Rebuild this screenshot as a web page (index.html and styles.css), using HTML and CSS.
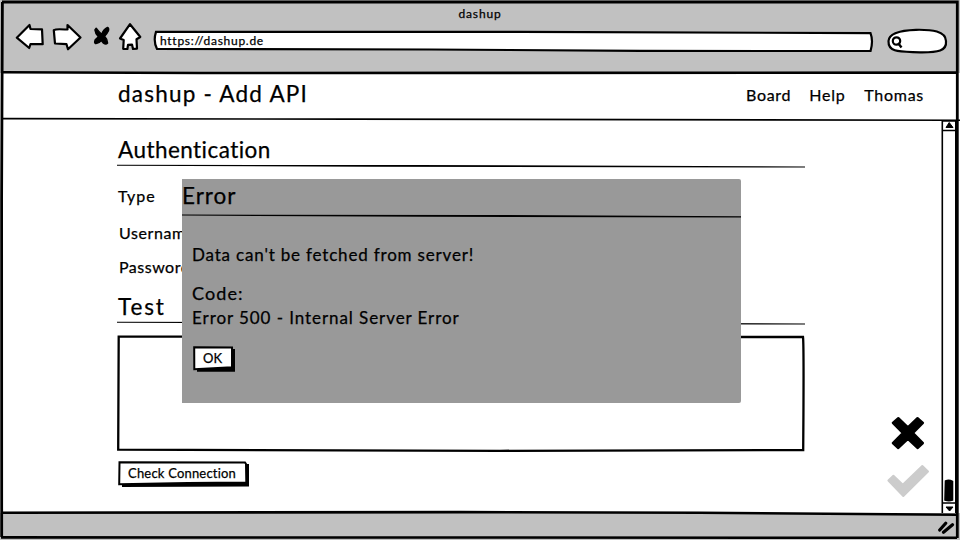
FILE: index.html
```html
<!DOCTYPE html>
<html lang="en">
<head>
<meta charset="utf-8">
<title>dashup</title>
<link rel="stylesheet" href="styles.css">
</head>
<body>
<div class="window">
  <header class="chrome">
    <div class="chrome-title"><span>dashup</span></div>
    <div class="toolbar">
      <svg class="nav-icons" width="130" height="32" viewBox="14 21 130 32" fill="#fff" stroke="#000" stroke-width="2.2" stroke-linejoin="round">
        <path d="M16.8 37.7 29.5 25 30.5 29 42 29.3 42.7 44.2 30.5 44 29.2 48Z"/>
        <path d="M53.8 30.2Q56 28.7 65 29.5L67.5 29.5 67.5 25 80.5 37.5 68 49.3 66.5 44.2 55 43.5Z"/>
        <path d="M96.2 28.2Q99 32 101.7 34.3 103.5 29.5 107.5 27.5 109.2 28 108.5 30.8 107 34 104.6 36.3 107.3 39 107.6 43 106 45 103.5 43.2L101.3 40.5Q98.5 44 95.3 43.5 94 42.5 95.2 39.8L98.4 36.7Q95.3 34 94.9 30Z" fill="#000" stroke-width="1.4"/>
        <path d="M130 24.2 140.3 37 136.5 39.3 137 48.6 133 49 132 44.6 128 44.8 127.4 49 123.2 48.8 123.7 40 120 38.5Z"/>
      </svg>
      <div class="address">
        <svg class="shape" viewBox="153 30 721 22" fill="#fff" stroke="#000" stroke-width="2.2"><path d="M156 31.8 520 31.8 870.5 33.2Q873.5 41 870.5 51.2L640 50.8 430 49.5 157 49Q153 41 156 31.8Z"/></svg>
        <span>https://dashup.de</span>
      </div>
      <svg class="search" width="62" height="26" viewBox="886 28 62 26" fill="#fff" stroke="#000" stroke-width="2.2">
        <path d="M888.5 41C889 33 900 30.3 916 29.8C932 29.5 945.5 31 946 41C947 51 938 52.5 920 52.3C901 51.5 888 53 888.5 41Z"/>
        <circle cx="896.5" cy="41" r="3.7"/><path d="m898 43 3.5 4.5" stroke-width="2.4"/>
      </svg>
    </div>
  </header>
  <div class="topbar">
    <h1>dashup - Add API</h1>
    <nav><a class="board">Board</a><a class="help">Help</a><a class="user">Thomas</a></nav>
  </div>
  <main>
    <section class="form">
      <h2 class="auth">Authentication</h2>
      <svg class="rule" width="688" height="4" viewBox="0 0 688 4"><path d="M0 .8 0 1.8 250 2.8 688 3.6 688 2.4 300 1Z"/></svg>
      <div class="field type">Type</div>
      <div class="field name">Username</div>
      <div class="field pass">Password</div>
      <h2 class="test">Test</h2>
      <svg class="rule" width="688" height="4" viewBox="0 0 688 4"><path d="M0 .8 0 1.8 250 2.8 688 3.6 688 2.4 300 1Z"/></svg>
      <svg class="result" width="688" height="117" viewBox="117 335 688 117" fill="#fff" stroke="#000" stroke-width="2.3"><path d="M118.7 336.6 803 337 Q804 345 803.2 450L500 450.8 118.2 449.6Z"/></svg>
      <button class="btn check">
        <svg class="shape" viewBox="0 0 131 27"><path d="M4 5 128 3 131 3 131 25.5 4 26Z"/><path d="M1.5 1.2 127 1.4 128 3 128.3 21.5 70 22 1.2 23.3Z" fill="#fff" stroke="#000" stroke-width="2"/></svg>
        <span>Check Connection</span>
      </button>
    </section>
    <div class="actions">
      <svg width="36" height="36" viewBox="890 415 36 36"><path d="M898.3 418.2 907.9 427.3 917.5 418.2 922.9 422.9 913 433 922.9 443 917.5 448 907.9 438.9 898.3 448 892.9 443 902.8 433 892.9 422.9Z" stroke="#000" stroke-width="2.4" stroke-linejoin="round"/></svg>
      <svg width="44" height="35" viewBox="886 463 44 35"><path d="M888.4 480.5 893.4 475.7 902.8 484.8 922.3 466 928 471.5 903.3 496Z" fill="#ccc" stroke="#ccc" stroke-width="2" stroke-linejoin="round"/></svg>
    </div>
    <svg class="scrollbar" width="17" height="396" viewBox="941 119 17 396" fill="none" stroke="#000" stroke-width="1.6">
      <path d="M942.3 120V515M955.8 120V515M942 121H956M942 130.5H956M942 503H956"/>
      <path d="m946 127.5 3.2-5 3.8 5zM946 507h7l-3.4 4z" fill="#000" stroke-width="1"/>
      <path d="M945.5 481Q949 479.5 952.5 481.5V500Q949 501.5 945 500Z" fill="#000"/>
    </svg>
  </main>
  <footer class="status"><svg width="17" height="16" viewBox="938 520 17 16" stroke="#000" stroke-width="3.2" stroke-linecap="round"><path d="m939.7 530 6-6.7M943.5 532.2l9-7.4"/></svg></footer>

  <svg class="frame" viewBox="0 0 960 540" fill="none" stroke="#000">
    <path d="M2 2 957.3 2 957.3 538" stroke-width="2.8"/>
    <path d="M2.4 2 1.6 200 1.7 537" stroke-width="2.8"/>
    <path d="M2 72.3 200 73 957 72.6" stroke-width="2.6"/>
    <path d="M2 512.8 460 512.1 700 512.8 957 514.8M1 537.4 450 537.5 957 537.8" stroke-width="2.6"/>
    <path d="M2 118.6 350 119.1 960 120.3" stroke-width="1.6"/>
  </svg>

  <div class="dialog" role="dialog">
    <h2 class="dialog-title">Error</h2>
    <svg class="dialog-rule" width="559" height="4" viewBox="0 0 559 4"><path d="M0 .6 0 1.6 240 2.7 559 3.5 559 2.3 300 .9Z"/></svg>
    <div class="dialog-body">
      <p class="message">Data can't be fetched from server!</p>
      <p class="code">Code:</p>
      <p class="detail">Error 500 - Internal Server Error</p>
      <button class="btn ok">
        <svg class="shape" viewBox="0 0 43 26"><path d="M4 3H42V25.8H4Z"/><path d="M1.2 1.2 39 1.5 39 21.3 1.3 23.3Z" fill="#fff" stroke="#000" stroke-width="2"/></svg>
        <span>OK</span>
      </button>
    </div>
  </div>
</div>
</body>
</html>
```
FILE: styles.css
```css
* { box-sizing: border-box; }
body { margin: 0; background: #fff; color: #000; font-family: Lato, "Open Sans", sans-serif; -webkit-text-stroke: .25px #000; }
h1, h2, p { margin: 0; font-weight: 400; white-space: nowrap; }
svg { display: block; flex: none; }

.window {
  position: relative;
  width: 960px;
  height: 540px;
  overflow: hidden;
  display: grid;
  grid-template-rows: 73px 46px 394px 27px;
}
.frame { position: absolute; inset: 0; width: 960px; height: 540px; pointer-events: none; }

.chrome { background: #c1c1c1; }
.chrome-title { height: 21px; padding-top: 6px; text-align: center; font-size: 12px; line-height: 15px; letter-spacing: .85px; }
.toolbar { display: flex; align-items: flex-start; padding-left: 14px; }
.address { position: relative; width: 721px; height: 22px; margin: 9px 12px 0 9px; padding-left: 7px; font-size: 12px; line-height: 22px; letter-spacing: .72px; }
.shape { position: absolute; inset: 0; width: 100%; height: 100%; }
.address span, .btn span { position: relative; }
.search { margin-top: 7px; }

.topbar { display: flex; justify-content: space-between; padding: 0 36px 0 118px; line-height: 42px; }
.topbar h1 { font-size: 22.5px; letter-spacing: 1.22px; }
.topbar nav { display: flex; gap: 18px; font-size: 16px; line-height: 44px; letter-spacing: .72px; }
.user { margin-left: 1px; }

main { display: flex; }
.form { width: 687px; margin-left: 118px; }
h2 { font-size: 22.5px; line-height: 28px; letter-spacing: .45px; }
.auth { margin-top: 17px; }
.rule { margin-left: -1px; }
.field { font-size: 16px; line-height: 20px; height: 20px; letter-spacing: .6px; }
.type { margin-top: 18px; letter-spacing: .95px; }
.name { margin: 17px 0 0 1px; }
.pass { margin: 14px 0 0 1px; letter-spacing: .5px; }
.test { margin-top: 16px; letter-spacing: 1.9px; }
.result { margin: 10px 0 0 -1px; }
.btn { position: relative; display: block; padding: 0; border: 0; background: none; color: #000; font: 13px/24px Lato, sans-serif; text-align: left; white-space: nowrap; }
.btn span { display: block; }
.check { display: flex; width: 131px; height: 27px; margin-top: 9px; padding-left: 10px; letter-spacing: .2px; }

.actions { display: flex; flex-direction: column; align-items: center; gap: 12px; margin: 296px 0 0 81px; width: 44px; }
.scrollbar { margin-left: 11px; }
.status { display: flex; justify-content: flex-end; background: #c1c1c1; padding: 7px 5px 0 0; }

.dialog { position: absolute; left: 182px; top: 179px; width: 559px; height: 223.5px; background: #999; border-radius: 0 2px 2px 0; }
.dialog-title { height: 35px; line-height: 34px; letter-spacing: 1px; }
.dialog-body { padding: 26px 0 0 10px; font-size: 17px; line-height: 22px; }
.message { letter-spacing: .82px; }
.code { margin-top: 16px; font-size: 18px; letter-spacing: 1.1px; }
.detail { margin-top: 3px; letter-spacing: .93px; }
.ok { display: flex; width: 43px; height: 26px; margin: 17px 0 0 1px; padding-left: 10px; }
```
